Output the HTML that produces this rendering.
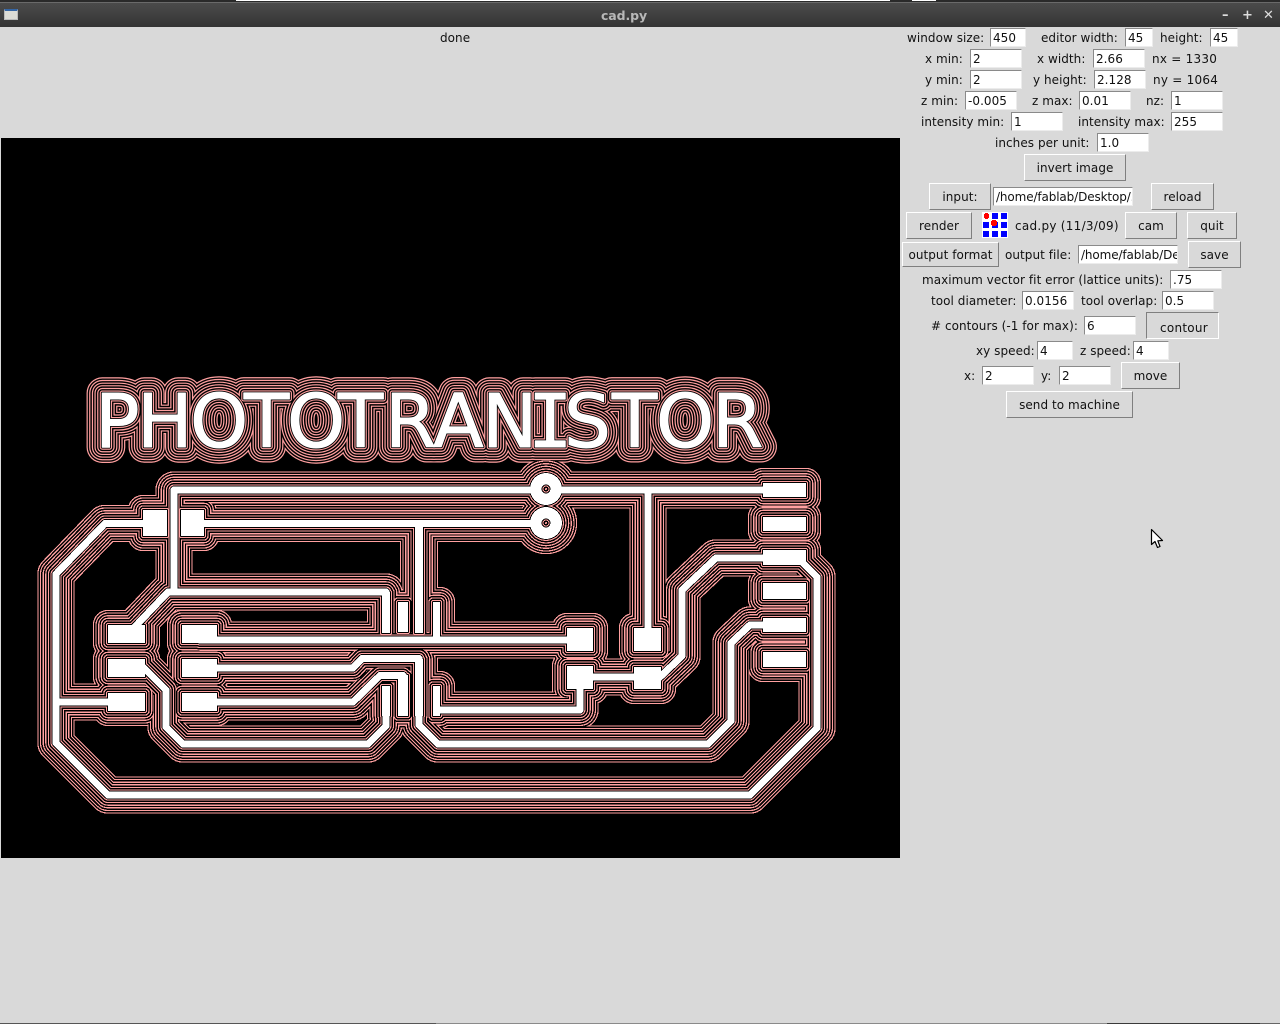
<!DOCTYPE html>
<html><head><meta charset="utf-8"><title>cad.py</title>
<style>
html,body{margin:0;padding:0;width:1280px;height:1024px;overflow:hidden;background:#d9d9d9}
body{position:relative;font:12px/21px "DejaVu Sans",sans-serif;color:#111;letter-spacing:.05px}
.a,.l,.e,.b{position:absolute;white-space:nowrap;box-sizing:border-box}
.l{height:19px}
.e{height:19px;background:#fff;border:1px solid;border-color:#8a8a8a #ececec #ececec #8a8a8a;padding-left:2px;line-height:19px;overflow:hidden}
.b{background:#d9d9d9;border:1px solid;border-color:#fff #7f7f7f #7f7f7f #fff;text-align:center}
#tb{position:absolute;left:0;top:0;width:1280px;height:27px;background:linear-gradient(#4c4c4c,#343434);border-top:2px solid #2a2a2a;box-sizing:border-box}
</style></head><body>
<div id="tb"><div class="a" style="left:0;top:0;width:1280px;height:1px;background:#6a6a6a"></div></div>
<div class="a" style="left:236px;top:0;width:654px;height:1px;background:#fff"></div>
<div class="a" style="left:912px;top:0;width:24px;height:1px;background:#fff"></div>
<div class="a" style="left:4px;top:9px;width:14px;height:11px;background:#dcdcd6;border:1px solid #bbb;border-top:2px solid #3465a4;box-sizing:border-box"></div>
<div class="a" style="left:601px;top:6px;font:bold 12.5px/19px 'DejaVu Sans',sans-serif;color:#b8b8b8;letter-spacing:-.1px">cad.py</div>
<div class="a" style="left:1222px;top:6px;font:bold 13px/19px 'DejaVu Sans',sans-serif;color:#ddd">–</div>
<div class="a" style="left:1242px;top:6px;font:bold 13px/19px 'DejaVu Sans',sans-serif;color:#ddd">+</div>
<div class="a" style="left:1263px;top:6px;font:bold 13px/19px 'DejaVu Sans',sans-serif;color:#ddd">✕</div>

<div class="l" style="left:440px;top:28px">done</div>

<svg style="position:absolute;left:1px;top:138px;background:#000;shape-rendering:crispEdges" width="899" height="720" viewBox="1 138 899 720" stroke-linejoin="round" stroke-linecap="round" xmlns="http://www.w3.org/2000/svg">
<defs>
<g id="L" fill="none">
<polyline points="128,634 168,592 386,592"/>
<polyline points="174,592 174,490 785,490"/>
<polyline points="648,490 648,640"/>
<polyline points="150,523.5 105,523.5 56,574 56,743 108,795 750,795 817,728 817,577 798,558 770,558"/>
<polyline points="56,702 120,702"/>
<polyline points="190,523.5 546,523.5"/>
<polyline points="200,640 580,640"/>
<polyline points="200,668 353,668 362,658.5 419,658.5"/>
<polyline points="419,716 419,725 438,744 708,744 731,721 731,643 750,625 785,625"/>
<polyline points="200,702 353,702 380,675.5 403,675.5"/>
<polyline points="126,668 144,668 166,690 166,727 183,744 368,744 386,726 386,710"/>
<polyline points="580,677 648,677 660,677 682,656 682,590 716,558 770,558"/>
<polyline points="580,677 580,710 437,710"/>
</g>
<g id="P">
<rect x="143" y="510" width="24" height="26"/><rect x="181" y="510" width="23" height="26"/>
<circle cx="546" cy="489" r="16"/><circle cx="546" cy="523" r="16"/>
<rect x="763" y="483" width="43" height="14"/><rect x="763" y="517" width="43" height="14"/><rect x="763" y="550" width="43" height="15"/><rect x="763" y="583" width="43" height="16"/><rect x="763" y="618" width="43" height="14"/><rect x="763" y="652" width="43" height="15"/>
<rect x="108" y="625" width="37" height="18"/><rect x="108" y="659" width="37" height="18"/><rect x="108" y="693" width="37" height="18"/>
<rect x="182" y="625" width="35" height="18"/><rect x="182" y="659" width="35" height="18"/><rect x="182" y="693" width="35" height="18"/>
<rect x="567" y="628" width="26" height="23"/><rect x="567" y="666" width="26" height="23"/><rect x="634" y="628" width="27" height="23"/><rect x="634" y="667" width="27" height="22"/>
<rect x="382" y="592" width="8" height="41"/><rect x="398" y="602" width="10" height="30"/><rect x="415" y="523" width="8" height="110"/><rect x="433" y="602" width="7" height="38"/>
<rect x="382" y="686" width="8" height="30"/><rect x="398" y="675" width="10" height="41"/><rect x="415" y="659" width="8" height="57"/><rect x="433" y="686" width="7" height="30"/>
</g>
<g id="X"><text y="447" font-family="'DejaVu Sans',sans-serif" font-size="74" letter-spacing="0" x="95 137 190 244 287 338 385 433 482">PHOTOTRAN<tspan font-family="'DejaVu Sans Mono',monospace" x="528">I</tspan><tspan x="564 612 656 712">STOR</tspan></text></g>
</defs>
<g stroke="#ffa0a0" fill="#ffa0a0"><use href="#L" stroke-width="37.4"/><use href="#P" stroke-width="30.4"/><use href="#X" stroke-width="31.4"/></g>
<g stroke="#000" fill="#000"><use href="#L" stroke-width="35"/><use href="#P" stroke-width="28"/><use href="#X" stroke-width="29"/></g>
<g stroke="#ffa0a0" fill="#ffa0a0"><use href="#L" stroke-width="32.2"/><use href="#P" stroke-width="25.2"/><use href="#X" stroke-width="26.2"/></g>
<g stroke="#000" fill="#000"><use href="#L" stroke-width="29.8"/><use href="#P" stroke-width="22.8"/><use href="#X" stroke-width="23.8"/></g>
<g stroke="#ffa0a0" fill="#ffa0a0"><use href="#L" stroke-width="26.8"/><use href="#P" stroke-width="19.8"/><use href="#X" stroke-width="20.8"/></g>
<g stroke="#000" fill="#000"><use href="#L" stroke-width="24.4"/><use href="#P" stroke-width="17.4"/><use href="#X" stroke-width="18.4"/></g>
<g stroke="#ffa0a0" fill="#ffa0a0"><use href="#L" stroke-width="21.6"/><use href="#P" stroke-width="14.6"/><use href="#X" stroke-width="15.6"/></g>
<g stroke="#000" fill="#000"><use href="#L" stroke-width="19.2"/><use href="#P" stroke-width="12.2"/><use href="#X" stroke-width="13.2"/></g>
<g stroke="#ffa0a0" fill="#ffa0a0"><use href="#L" stroke-width="16.2"/><use href="#P" stroke-width="9.2"/><use href="#X" stroke-width="10.2"/></g>
<g stroke="#000" fill="#000"><use href="#L" stroke-width="13.8"/><use href="#P" stroke-width="6.8"/><use href="#X" stroke-width="7.8"/></g>
<g stroke="#ffa0a0" fill="#ffa0a0"><use href="#L" stroke-width="11"/><use href="#P" stroke-width="4"/><use href="#X" stroke-width="5"/></g>
<g stroke="#000" fill="#000"><use href="#L" stroke-width="8.8"/><use href="#P" stroke-width="1.8"/><use href="#X" stroke-width="2.8"/></g>
<g stroke="#fff" fill="#fff"><use href="#L" stroke-width="7"/><use href="#P" stroke-width="0"/><use href="#X" stroke-width="1"/></g>
<g stroke="none"><circle cx="546" cy="489" r="4.5" fill="#000"/><circle cx="546" cy="489" r="3.5" fill="#ffa0a0"/><circle cx="546" cy="489" r="2.5" fill="#000"/><circle cx="546" cy="489" r="1" fill="#ffa0a0"/><circle cx="546" cy="523" r="4.5" fill="#000"/><circle cx="546" cy="523" r="3.5" fill="#ffa0a0"/><circle cx="546" cy="523" r="2.5" fill="#000"/><circle cx="546" cy="523" r="1" fill="#ffa0a0"/></g>
</svg>

<div class="l" style="left:907px;top:28px">window size:</div><div class="e" style="left:990px;top:28px;width:36px">450</div>
<div class="l" style="left:1041px;top:28px">editor width:</div><div class="e" style="left:1125px;top:28px;width:28px">45</div>
<div class="l" style="left:1160px;top:28px">height:</div><div class="e" style="left:1210px;top:28px;width:28px">45</div>

<div class="l" style="left:925px;top:49px">x min:</div><div class="e" style="left:970px;top:49px;width:52px">2</div>
<div class="l" style="left:1037px;top:49px">x width:</div><div class="e" style="left:1093px;top:49px;width:52px">2.66</div>
<div class="l" style="left:1152px;top:49px;letter-spacing:.25px">nx = 1330</div>

<div class="l" style="left:925px;top:70px">y min:</div><div class="e" style="left:970px;top:70px;width:52px">2</div>
<div class="l" style="left:1033px;top:70px">y height:</div><div class="e" style="left:1094px;top:70px;width:52px">2.128</div>
<div class="l" style="left:1153px;top:70px;letter-spacing:.25px">ny = 1064</div>

<div class="l" style="left:921px;top:91px">z min:</div><div class="e" style="left:965px;top:91px;width:52px">-0.005</div>
<div class="l" style="left:1032px;top:91px">z max:</div><div class="e" style="left:1079px;top:91px;width:52px">0.01</div>
<div class="l" style="left:1146px;top:91px">nz:</div><div class="e" style="left:1171px;top:91px;width:52px">1</div>

<div class="l" style="left:921px;top:112px">intensity min:</div><div class="e" style="left:1011px;top:112px;width:52px">1</div>
<div class="l" style="left:1078px;top:112px">intensity max:</div><div class="e" style="left:1171px;top:112px;width:52px">255</div>

<div class="l" style="left:995px;top:133px">inches per unit:</div><div class="e" style="left:1097px;top:133px;width:52px">1.0</div>

<div class="b" style="left:1024px;top:154px;width:102px;height:27px;line-height:27px">invert image</div>

<div class="b" style="left:929px;top:183px;width:62px;height:27px;line-height:27px">input:</div>
<div class="e" style="left:993px;top:187px;width:140px;letter-spacing:-.12px">/home/fablab/Desktop/.</div>
<div class="b" style="left:1151px;top:183px;width:63px;height:27px;line-height:27px">reload</div>

<div class="b" style="left:906px;top:212px;width:66px;height:27px;line-height:27px">render</div>
<svg style="position:absolute;left:982px;top:212px;shape-rendering:crispEdges" width="26" height="26" viewBox="0 0 26 26">
<rect width="26" height="26" fill="#fff"/>
<g fill="#0000ff"><rect x="10" y="1" width="6" height="6"/><rect x="19" y="1" width="6" height="6"/><rect x="1" y="10" width="6" height="6"/><rect x="10" y="10" width="6" height="6"/><rect x="19" y="10" width="6" height="6"/><rect x="1" y="19" width="6" height="6"/><rect x="10" y="19" width="6" height="6"/><rect x="19" y="19" width="6" height="6"/></g>
<g fill="#ff0000"><rect x="2" y="2" width="5" height="4"/><rect x="3" y="1" width="3" height="6"/><rect x="9" y="9" width="6" height="4"/><rect x="10" y="8" width="4" height="6"/></g></svg>
<div class="l" style="left:1015px;top:216px;letter-spacing:.27px">cad.py (11/3/09)</div>
<div class="b" style="left:1125px;top:212px;width:52px;height:27px;line-height:27px">cam</div>
<div class="b" style="left:1187px;top:212px;width:50px;height:27px;line-height:27px">quit</div>

<div class="b" style="left:902px;top:242px;width:97px;height:25px;line-height:25px">output format</div>
<div class="l" style="left:1005px;top:245px">output file:</div>
<div class="e" style="left:1078px;top:245px;width:100px;letter-spacing:-.12px">/home/fablab/De</div>
<div class="b" style="left:1188px;top:241px;width:53px;height:27px;line-height:27px">save</div>

<div class="l" style="left:922px;top:270px">maximum vector fit error (lattice units):</div><div class="e" style="left:1170px;top:270px;width:52px">.75</div>

<div class="l" style="left:931px;top:291px">tool diameter:</div><div class="e" style="left:1022px;top:291px;width:52px">0.0156</div>
<div class="l" style="left:1081px;top:291px">tool overlap:</div><div class="e" style="left:1162px;top:291px;width:52px">0.5</div>

<div class="l" style="left:931px;top:316px"># contours (-1 for max):</div><div class="e" style="left:1084px;top:316px;width:52px">6</div>
<div class="b" style="left:1146px;top:312px;width:73px;height:27px;line-height:30px;padding-left:3px;letter-spacing:.25px;border-color:#7f7f7f #fff #fff #7f7f7f">contour</div>

<div class="l" style="left:976px;top:341px">xy speed:</div><div class="e" style="left:1037px;top:341px;width:36px">4</div>
<div class="l" style="left:1080px;top:341px">z speed:</div><div class="e" style="left:1133px;top:341px;width:36px">4</div>

<div class="l" style="left:964px;top:366px">x:</div><div class="e" style="left:982px;top:366px;width:52px">2</div>
<div class="l" style="left:1041px;top:366px">y:</div><div class="e" style="left:1059px;top:366px;width:52px">2</div>
<div class="b" style="left:1121px;top:362px;width:59px;height:27px;line-height:27px">move</div>

<div class="b" style="left:1006px;top:391px;width:127px;height:27px;line-height:27px">send to machine</div>

<svg style="position:absolute;left:1150px;top:528px" width="16" height="22" viewBox="0 0 16 22"><path d="M1.5 1.5V16.5L5 13.5L7.5 19.5L10 18.5L7.8 12.8L12.5 12.5Z" fill="#fff" stroke="#000" stroke-width="1.2" stroke-linejoin="round"/></svg>

<div class="a" style="left:0;top:1023px;width:436px;height:1px;background:#555"></div>
<div class="a" style="left:436px;top:1023px;width:671px;height:1px;background:#8a8a8a"></div>
<div class="a" style="left:1107px;top:1023px;width:153px;height:1px;background:#3a3a3a"></div>
<div class="a" style="left:1260px;top:1023px;width:20px;height:1px;background:#666"></div>
</body></html>
